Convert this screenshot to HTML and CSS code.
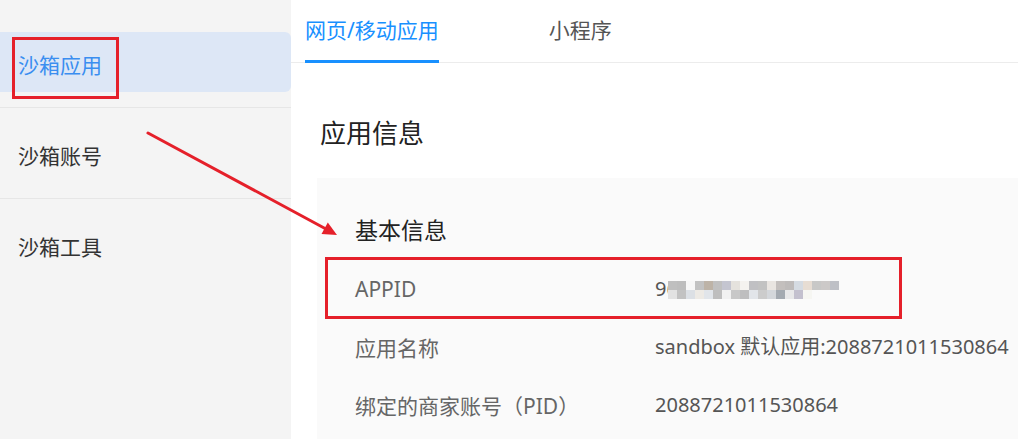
FILE: index.html
```html
<!DOCTYPE html>
<html lang="zh-CN">
<head>
<meta charset="utf-8">
<title>沙箱应用</title>
<link rel="stylesheet" href="styles.css">
</head>
<body>
<div class="page">
  <aside class="sidebar">
    <div class="nav-item active">沙箱应用<span class="mark mark-nav"></span></div>
    <div class="nav-sep"></div>
    <div class="nav-item">沙箱账号</div>
    <div class="nav-sep"></div>
    <div class="nav-item">沙箱工具</div>
  </aside>
  <main class="main">
    <div class="tabs">
      <div class="tab active">网页/移动应用</div>
      <div class="tab">小程序</div>
    </div>
    <h2 class="page-title">应用信息</h2>
    <section class="panel">
      <h3 class="panel-title">基本信息</h3>
      <div class="row">
        <span class="label">APPID</span>
        <span class="value appid">96<span class="mosaic"></span></span>
        <span class="mark mark-row"></span>
      </div>
      <div class="row">
        <span class="label">应用名称</span>
        <span class="value">sandbox 默认应用:2088721011530864</span>
      </div>
      <div class="row">
        <span class="label">绑定的商家账号（PID）</span>
        <span class="value">2088721011530864</span>
      </div>
    </section>
  </main>
  <svg class="arrow" width="1018" height="439" viewBox="0 0 1018 439">
    <line x1="148" y1="133" x2="326" y2="229" stroke="#e5202a" stroke-width="3" stroke-linecap="round"/>
    <polygon points="337,235 321.5,234 327.8,222.5" fill="#e5202a"/>
  </svg>
</div>
</body>
</html>
```
FILE: styles.css
```css
* { box-sizing: border-box; }
html, body { margin: 0; padding: 0; }
body {
  font-family: "Noto Sans", "Noto Sans CJK SC", sans-serif;
  background: #ffffff;
  color: #333;
}
.page {
  position: relative;
  display: flex;
  width: 1018px;
  height: 439px;
  overflow: hidden;
}
.sidebar {
  width: 291px;
  flex: none;
  background: #f4f4f4;
  padding-top: 32px;
}
.nav-item {
  position: relative;
  height: 60px;
  display: flex;
  align-items: center;
  padding-left: 18px;
  padding-top: 3px;
  font-size: 21px;
  color: #333;
}
.nav-item.active {
  background: #dde7f6;
  color: #3a8ef0;
  border-radius: 0 6px 6px 0;
}
.nav-sep {
  height: 1px;
  background: #e6e6e6;
  margin: 15px 0;
}
.mark {
  position: absolute;
  border: 3px solid #e5202a;
  pointer-events: none;
}
.mark-nav {
  left: 12px;
  top: 5px;
  width: 107px;
  height: 62px;
}
.main {
  flex: 1;
  display: flex;
  flex-direction: column;
  min-width: 0;
}
.tabs {
  display: flex;
  gap: 110px;
  padding-left: 14px;
  height: 63px;
  border-bottom: 1px solid #ececec;
}
.tab {
  box-sizing: content-box;
  height: 60px;
  line-height: 60px;
  font-size: 21px;
  color: #555;
  border-bottom: 3px solid transparent;
  margin-bottom: -1px;
  white-space: nowrap;
}
.tab.active {
  color: #1890ff;
  border-bottom-color: #1890ff;
}
.page-title {
  margin: 52px 0 27px 0;
  padding-left: 29px;
  font-size: 26px;
  line-height: 36px;
  font-weight: normal;
  color: #222;
}
.panel {
  flex: 1;
  margin-left: 26px;
  background: #fafafa;
  padding: 36px 0 0 38px;
}
.panel-title {
  margin: 0 0 14px 0;
  font-size: 23px;
  line-height: 32px;
  font-weight: normal;
  color: #222;
}
.row {
  position: relative;
  display: flex;
  align-items: center;
  height: 58px;
  font-size: 20px;
}
.label {
  width: 300px;
  flex: none;
  color: #666;
  font-size: 21px;
  white-space: nowrap;
}
.value {
  color: #555;
  white-space: nowrap;
  line-height: 28px;
}
.appid {
  position: relative;
  display: inline-block;
}
.mosaic {
  position: absolute;
  left: 13px;
  top: 6px;
  width: 171px;
  height: 18px;
  background:
    linear-gradient(to right,
      #bfbfbf 0 9px, #bdbdbd 9px 18px, #f7f7f7 18px 27px, #c2c2c2 27px 36px,
      #bdb3a7 36px 45px, #c0c0c0 45px 54px, #c4c5d0 54px 63px, #e5e2dd 63px 72px,
      #f4f2ef 72px 81px, #c0c0c3 81px 90px, #c2c2c2 90px 99px, #e9e5e1 99px 108px,
      #c3bfbd 108px 117px, #bebbba 117px 126px, #d5dbe2 126px 135px, #e7ddd3 135px 144px,
      #c8c8c7 144px 153px, #ccc9c8 153px 162px, #bec0c6 162px 171px) top left / 100% 50% no-repeat,
    linear-gradient(to right,
      #e2e2e2 0 9px, #c2c2c2 9px 18px, #dce0e5 18px 27px, #edeae5 27px 36px,
      #e1e5ea 36px 45px, #bebebe 45px 54px, #f1f1f1 54px 63px, #c8c8c8 63px 72px,
      #bebebf 72px 81px, #e2e5e9 81px 90px, #cccccc 90px 99px, #d4d7db 99px 108px,
      #a4aab1 108px 117px, #e8e8e9 117px 126px, #c3c0ce 126px 135px, #f6f6f2 135px 144px,
      #fafafa 144px 171px) bottom left / 100% 50% no-repeat;
}
.mark-row {
  left: -30px;
  top: -3px;
  width: 577px;
  height: 62px;
}
.arrow {
  position: absolute;
  left: 0;
  top: 0;
  pointer-events: none;
}
```
